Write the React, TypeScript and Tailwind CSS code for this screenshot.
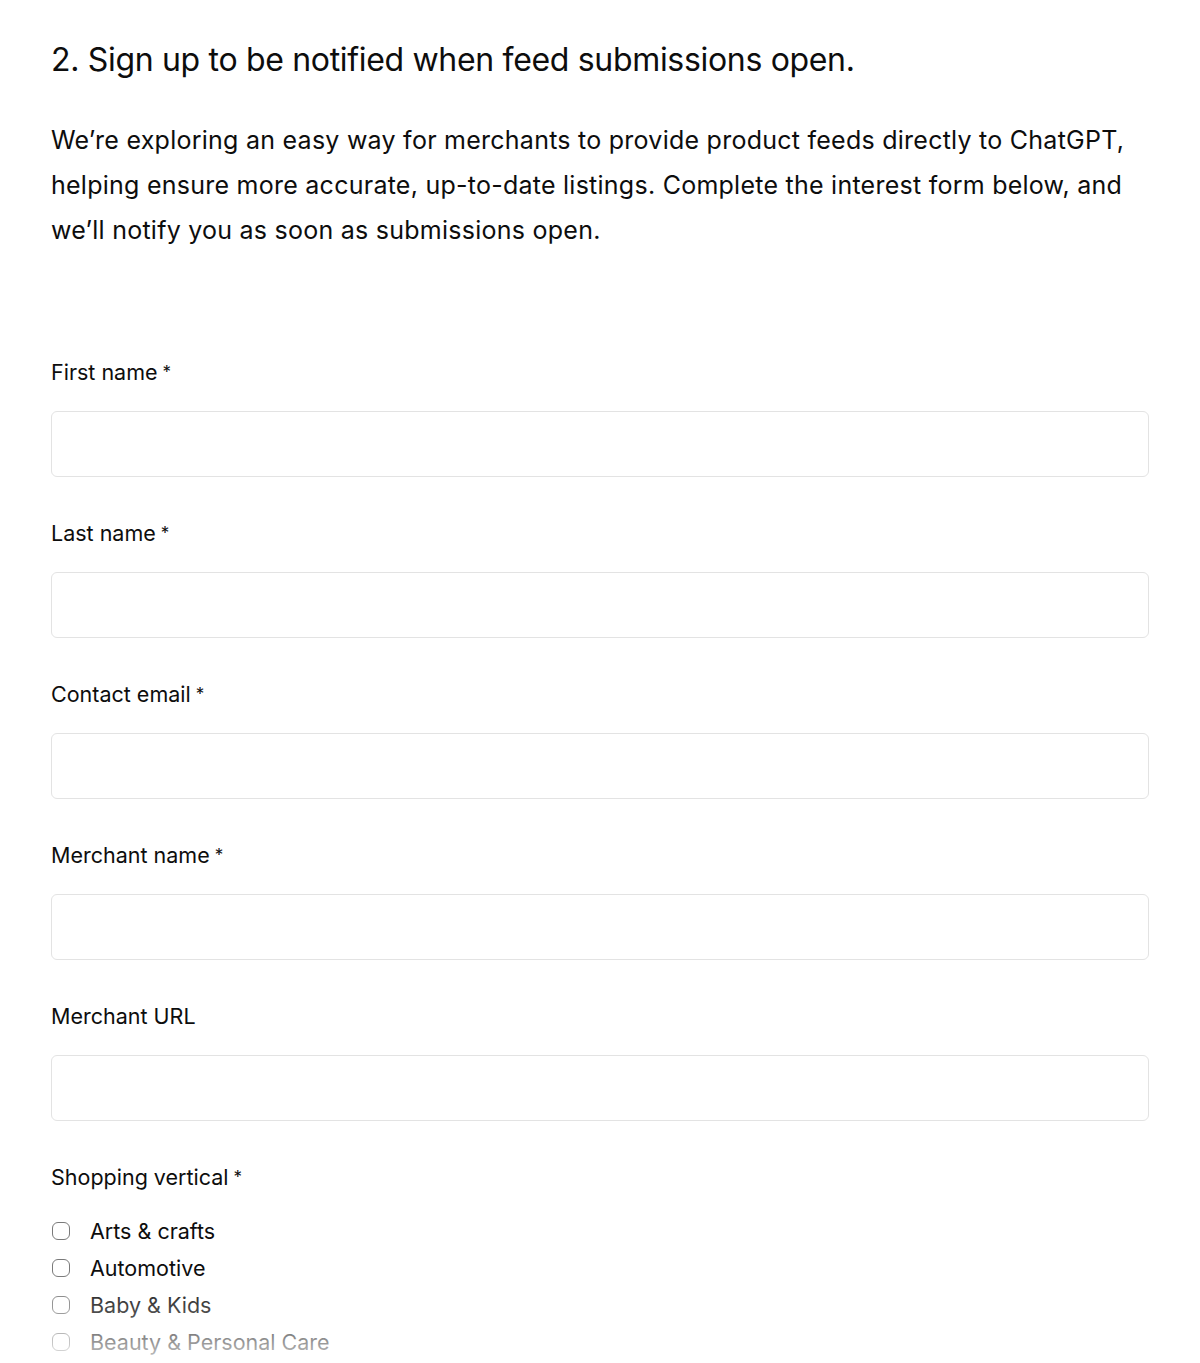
import React from "react";

const fields = [
  { label: "First name", required: true },
  { label: "Last name", required: true },
  { label: "Contact email", required: true },
  { label: "Merchant name", required: true },
  { label: "Merchant URL", required: false },
];

const verticals = ["Arts & crafts", "Automotive", "Baby & Kids", "Beauty & Personal Care"];

export default function App() {
  return (
    <main
      className="relative h-[1363px] overflow-hidden bg-white text-[#0d0d0d]"
      style={{ fontFamily: "Inter, 'Noto Sans', sans-serif" }}
    >
      <div className="px-[51px] pt-[40px]">
        <h2 className="text-[32px] leading-[40px] font-normal tracking-[-0.01em]">
          2. Sign up to be notified when feed submissions open.
        </h2>
        <p className="mt-[38px] text-[25px] leading-[45px] tracking-[0.01em]">
          We’re exploring an easy way for merchants to provide product feeds directly to ChatGPT,
          helping ensure more accurate, up-to-date listings. Complete the interest form below, and
          we’ll notify you as soon as submissions open.
        </p>

        <form className="mt-[105px]">
          {fields.map((f) => (
            <div key={f.label} className="mb-[42px]">
              <label className="block text-[21.5px] leading-[28px]">
                {f.label}
                {f.required && <span className="ml-[5px] align-top text-[17px]">*</span>}
              </label>
              <input
                type="text"
                className="mt-[25px] block h-[66px] w-full rounded-[6px] border border-[#e3e3e3] bg-white"
              />
            </div>
          ))}

          <div>
            <label className="block text-[21.5px] leading-[28px]">
              Shopping vertical<span className="ml-[5px] align-top text-[17px]">*</span>
            </label>
            <div className="mt-[26px] flex flex-col gap-[9px]">
              {verticals.map((v) => (
                <label key={v} className="flex items-center gap-[20px] text-[21.5px] leading-[28px]">
                  <input
                    type="checkbox"
                    className="ml-[1px] h-[18px] w-[18px] appearance-none rounded-[6px] border-[1.5px] border-[#7a7a7a] bg-white"
                  />
                  {v}
                </label>
              ))}
            </div>
          </div>
        </form>
      </div>
      <div className="pointer-events-none absolute inset-x-0 bottom-0 h-[90px] bg-gradient-to-b from-white/0 via-white/30 to-white/80" />
    </main>
  );
}
